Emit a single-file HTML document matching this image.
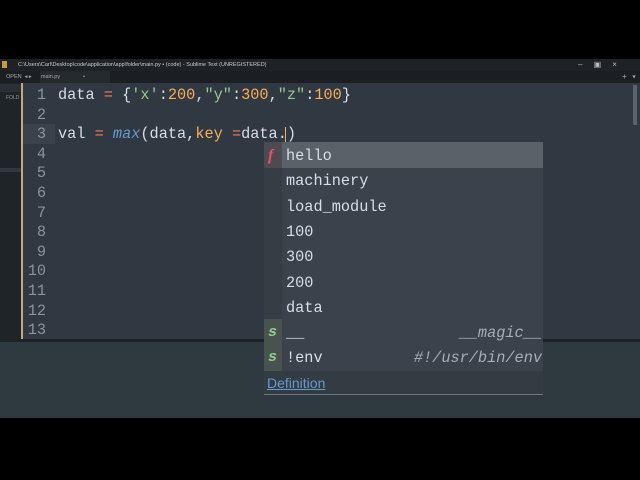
<!DOCTYPE html>
<html><head><style>
*{margin:0;padding:0;box-sizing:border-box}
body{width:640px;height:480px;background:#000;position:relative;overflow:hidden;font-family:"Liberation Mono",monospace}
.abs{position:absolute}
.code{font-size:15.25px;line-height:19.6px;white-space:pre;color:#d8dee9}
.ln{color:#8a949e;text-align:right;width:26px;left:20px}
.row{position:absolute;left:22px;width:258px;height:25.3px;line-height:25.3px;font-size:15.25px;color:#d8dee9;white-space:pre}
</style></head><body>
<div class="abs" style="left:0;top:59px;width:640px;height:12px;background:#1e2226"></div>
<div class="abs" style="left:2px;top:61px;width:5px;height:7px;background:#c89a3a"></div>
<div class="abs" style="left:18px;top:59px;font-family:'Liberation Sans',sans-serif;font-size:5.5px;line-height:12px;color:#c8ccd0">C:\Users\Carl\Desktop\code\application\app\folder\main.py • (code) - Sublime Text (UNREGISTERED)</div>
<div class="abs" style="left:578px;top:59px;font-size:8px;line-height:12px;color:#bbb;font-family:'Liberation Sans',sans-serif">–&nbsp;&nbsp;&nbsp;&nbsp;&nbsp;▣&nbsp;&nbsp;&nbsp;&nbsp;&nbsp;×</div>
<div class="abs" style="left:0;top:71px;width:640px;height:12px;background:#1b1f23"></div>
<div class="abs" style="left:40px;top:71px;width:70px;height:12px;background:#252a2f"></div>
<div class="abs" style="left:6px;top:71px;font-family:'Liberation Sans',sans-serif;font-size:5.5px;line-height:13px;color:#aaa">OPEN&nbsp;&nbsp;◂ ▸&nbsp;&nbsp;&nbsp;&nbsp;&nbsp;&nbsp;main.py&nbsp;&nbsp;&nbsp;&nbsp;&nbsp;&nbsp;&nbsp;&nbsp;&nbsp;&nbsp;&nbsp;&nbsp;&nbsp;&nbsp;&nbsp;•</div>
<div class="abs" style="left:622px;top:71px;font-size:8px;line-height:13px;color:#aaa">+ ▾</div>
<div class="abs" style="left:0;top:83px;width:21px;height:256px;background:#1f2428"></div>
<div class="abs" style="left:0;top:84px;width:21px;height:8px;background:#2b3036"></div>
<div class="abs" style="left:6px;top:95px;font-size:5px;color:#999;font-family:'Liberation Sans',sans-serif">FOLD</div>
<div class="abs" style="left:0;top:168px;width:21px;height:4px;background:#33383e"></div>
<div class="abs" style="left:21px;top:83px;width:2px;height:256px;background:#c9a77a"></div>
<div class="abs" style="left:23px;top:83px;width:617px;height:256px;background:#303841"></div>
<div class="abs" style="left:23px;top:124px;width:32px;height:20px;background:#3a424b"></div>
<div class="abs" style="left:633px;top:85px;width:4px;height:40px;background:#5a636c"></div>
<div class="abs code ln" style="top:86px">1
2
3
4
5
6
7
8
9
10
11
12
13</div>
<div class="abs code" style="left:58px;top:86px">data <span style="color:#f97b58">=</span> {<span style="color:#99c794">'x'</span>:<span style="color:#f9ae58">200</span>,<span style="color:#99c794">"y"</span>:<span style="color:#f9ae58">300</span>,<span style="color:#99c794">"z"</span>:<span style="color:#f9ae58">100</span>}

val <span style="color:#f97b58">=</span> <i style="color:#6699cc">max</i>(data,<span style="color:#f9ae58">key</span> <span style="color:#f97b58">=</span>data.)</div>
<div class="abs" style="left:285px;top:127px;width:1px;height:17px;background:#f9ae58"></div>
<div class="abs" style="left:0;top:339px;width:640px;height:3px;background:#1d2227"></div>
<div class="abs" style="left:0;top:342px;width:640px;height:76px;background:#2f3a40"></div>
<div class="abs" style="left:264px;top:142px;width:279px;height:229px;background:#3b424b">
<div class="abs" style="left:0;top:0;width:18px;height:229px;background:#363d45"></div>
<div class="abs" style="left:0;top:0;width:279px;height:26px;background:#5b6169"></div>
<div class="abs" style="left:0;top:0;width:18px;height:26px;background:#4f4a52"></div>
<div class="abs" style="left:0;top:177px;width:18px;height:52px;background:#48534e"></div>
<div class="row" style="top:2px">hello</div>
<div class="row" style="top:27.3px">machinery</div>
<div class="row" style="top:52.6px">load_module</div>
<div class="row" style="top:77.9px">100</div>
<div class="row" style="top:103.2px">300</div>
<div class="row" style="top:128.5px">200</div>
<div class="row" style="top:153.8px">data</div>
<div class="row" style="top:179.1px">__<span style="position:absolute;right:2px;font-style:italic;color:#a7adba">__magic__</span></div>
<div class="row" style="top:204.4px">!env<span style="position:absolute;right:2px;font-style:italic;color:#a7adba">#!/usr/bin/env</span></div>
<div class="abs" style="left:4px;top:1px;line-height:26px;font-size:16px;font-style:italic;font-weight:bold;color:#e05563;font-family:'Liberation Serif',serif">f</div>
<div class="abs" style="left:4px;top:178px;line-height:25px;font-size:15px;font-style:italic;font-weight:bold;color:#99c794">s</div>
<div class="abs" style="left:4px;top:203px;line-height:25px;font-size:15px;font-style:italic;font-weight:bold;color:#99c794">s</div>
</div>
<div class="abs" style="left:264px;top:371px;width:279px;height:24px;background:#333b43;border-bottom:1px solid #6f777f"></div>
<div class="abs" style="left:267px;top:372px;line-height:23px;font-family:'Liberation Sans',sans-serif;font-size:14px;color:#6699cc;text-decoration:underline">Definition</div>
</body></html>
